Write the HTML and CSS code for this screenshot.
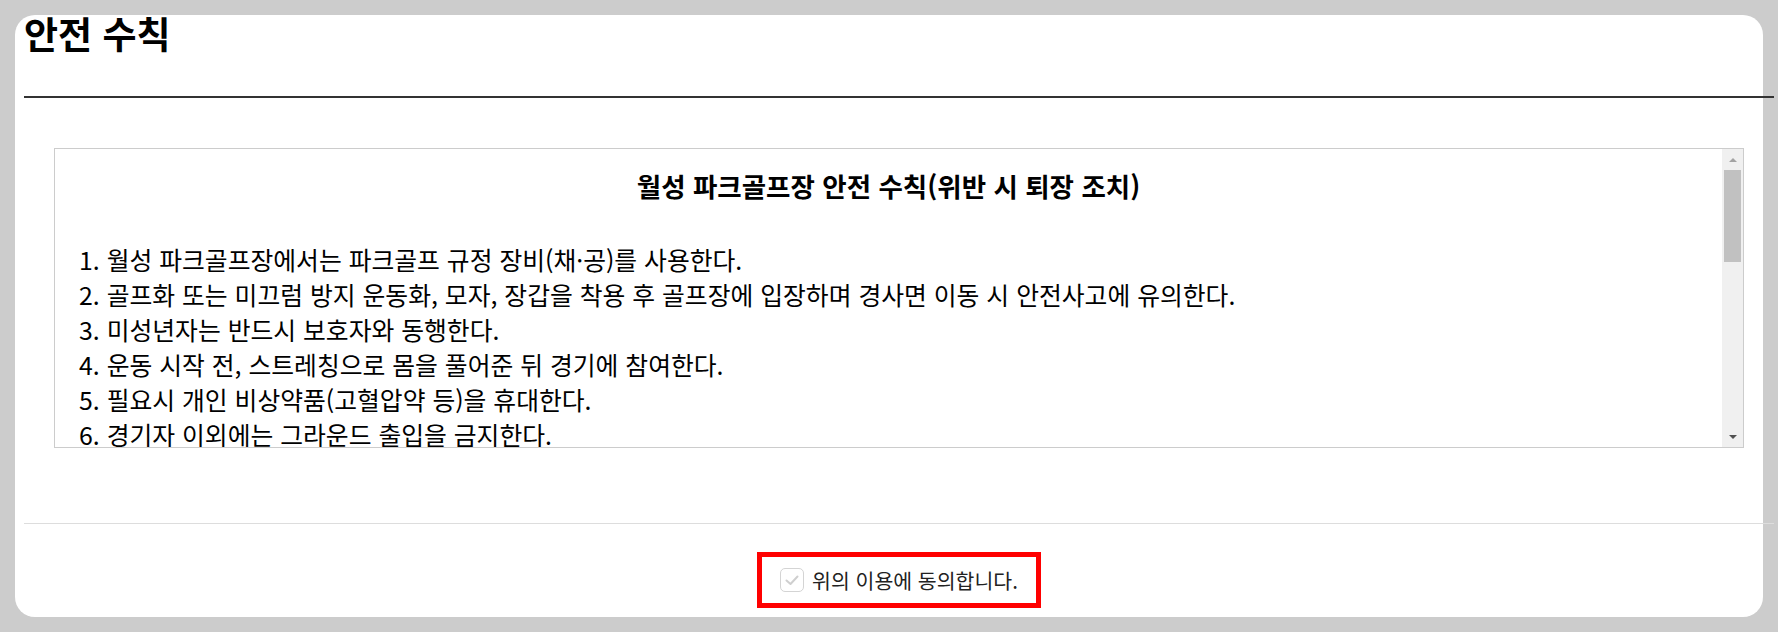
FILE: index.html
```html
<!DOCTYPE html>
<html lang="ko">
<head>
  <meta charset="UTF-8" />
  <title>안전 수칙</title>
  <link rel="stylesheet" href="styles.css">
</head>
<body>

<div class="card">
  <div class="inner">
    <h2 class="page-title">안전 수칙</h2>
    <hr class="title-rule">

    <div class="rules-box">
      <div class="rules-content">
        <h3>월성 파크골프장 안전 수칙(위반 시 퇴장 조치)</h3>
        <ol>
          <li>월성 파크골프장에서는 파크골프 규정 장비(채·공)를 사용한다.</li>
          <li>골프화 또는 미끄럼 방지 운동화, 모자, 장갑을 착용 후 골프장에 입장하며 경사면 이동 시 안전사고에 유의한다.</li>
          <li>미성년자는 반드시 보호자와 동행한다.</li>
          <li>운동 시작 전, 스트레칭으로 몸을 풀어준 뒤 경기에 참여한다.</li>
          <li>필요시 개인 비상약품(고혈압약 등)을 휴대한다.</li>
          <li>경기자 이외에는 그라운드 출입을 금지한다.</li>
          <li>타구 방향에 사람이 있을 경우 절대 타구하지 않는다.</li>
          <li>앞 조의 경기가 끝나기 전에는 타구하지 않는다.</li>
          <li>경기 중 음주 및 흡연을 금지한다.</li>
          <li>애완동물의 출입을 금지한다.</li>
          <li>쓰레기는 반드시 지정된 장소에 버리거나 되가져간다.</li>
          <li>잔디 및 시설물을 훼손하지 않는다.</li>
          <li>낙뢰, 폭우 등 기상 악화 시 즉시 경기를 중단하고 대피한다.</li>
          <li>안전사고 발생 시 즉시 관리자에게 알린다.</li>
          <li>관리자의 안내 및 지시에 따른다.</li>
        </ol>
      </div>
      <div class="scrollbar">
        <span class="sb-btn"><span class="arrow-up"></span></span>
        <div class="sb-track"><span class="sb-thumb"></span></div>
        <span class="sb-btn"><span class="arrow-down"></span></span>
      </div>
    </div>

    <div class="agree-area">
      <label class="agree">
        <span class="check-box">
          <svg width="20" height="20" viewBox="0 0 20 20"><polyline points="4.5,10.5 8.5,14 15.5,6.5" fill="none" stroke="#cfcfcf" stroke-width="2" stroke-linecap="round" stroke-linejoin="round"/></svg>
        </span>
        <span>위의 이용에 동의합니다.</span>
      </label>
    </div>
  </div>
</div>

</body>
</html>
```

FILE: styles.css
```css
body {
  margin: 0;
  padding: 15px;
  background: #ccc;
  font-family: "Noto Sans CJK KR", "Noto Sans", sans-serif;
  color: #000;
}

.card {
  background: #fff;
  border-radius: 20px;
  padding: 0 0 9px 9px;
}
.inner { width: calc(100% + 11px); }

.page-title {
  margin: 0;
  font-size: 37px; line-height: 37px;
  font-weight: bold;
}

.title-rule {
  margin: 44px 0 0;
  border: none;
  border-top: 2px solid #333;
}

/* 안전 수칙 박스 */
.rules-box {
  display: flex;
  height: 300px;
  box-sizing: border-box;
  margin: 50px 30px 0 30px;
  border: 1px solid #ccc;
}
.rules-content {
  flex: 1;
  overflow: hidden;
  padding: 17px 24px 0 24px;
  font-size: 24.8px;
  line-height: 35px;
}
.rules-content h3 {
  margin: 0 0 36px;
  text-align: center;
  font-size: 26.5px; line-height: 40px;
  font-weight: bold;
}
.rules-content ol {
  margin: 0; padding: 0;
  list-style-position: inside;
}

.scrollbar {
  width: 21px;
  background: #f0f0f0;
  display: flex; flex-direction: column;
}
.sb-btn {
  height: 21px;
  display: flex; align-items: center; justify-content: center;
}
.sb-track { flex: 1; }
.sb-thumb {
  display: block;
  height: 92px;
  margin: 0 2px;
  background: #c1c1c1;
}
.arrow-up {
  border-left: 4px solid transparent;
  border-right: 4px solid transparent;
  border-bottom: 4px solid #a3a3a3;
}
.arrow-down {
  border-left: 4px solid transparent;
  border-right: 4px solid transparent;
  border-top: 4px solid #505050;
}

/* 동의 체크 */
.agree-area {
  margin-top: 75px;
  border-top: 1px solid #ddd;
  padding-top: 28px;
  display: flex;
  justify-content: center;
}

.agree {
  display: flex;
  align-items: center;
  gap: 8px;
  height: 46px;
  padding: 0 18px;
  border: 5px solid #f00;
  font-size: 20.5px;
  color: #222;
}

.check-box {
  width: 22px; height: 22px;
  border: 1.5px solid #d4d4d4;
  border-radius: 5px;
  display: flex; align-items: center; justify-content: center;
}
```
